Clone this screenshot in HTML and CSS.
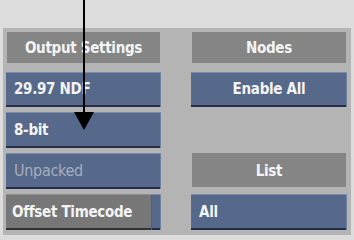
FILE: index.html
```html
<!DOCTYPE html>
<html lang="en">
<head>
  <meta charset="UTF-8">
  <title>Output Settings</title>
  <link rel="stylesheet" href="styles.css">
</head>
<body>

  <!-- Settings panel -->
  <div class="panel">
    <div class="header">Output Settings</div>
    <div class="header">Nodes</div>

    <div class="btn">29.97 NDF</div>
    <div class="btn center">Enable All</div>

    <div class="btn">8-bit</div>
    <div class="blank"></div>

    <div class="btn disabled">Unpacked</div>
    <div class="header list">List</div>

    <div class="btn toggle"><span class="toggle-on">Offset Timecode</span></div>
    <div class="btn">All</div>
  </div>

  <!-- Callout arrow -->
  <svg class="arrow" width="24" height="132" viewBox="0 0 24 132">
    <line x1="12" y1="0" x2="12" y2="114" stroke="#000" stroke-width="2"/>
    <polygon points="2,112 22,112 12,130" fill="#000"/>
  </svg>

</body>
</html>
```

FILE: styles.css
```css
body {
  margin: 0;
  padding: 28px 3px 0 3px;
  background: #dcdcdc;
  font-family: 'DejaVu Sans Condensed', 'DejaVu Sans', sans-serif;
  font-weight: bold;
  font-size: 15px;
  letter-spacing: -0.3px;
  color: #f4f4f4;
  position: relative;
  height: 240px;
  box-sizing: border-box;
}

.panel {
  width: 348px;
  height: 207px;
  box-sizing: border-box;
  background: #b4b4b4;
  padding: 4px 4px 0 3px;
  display: grid;
  grid-template-columns: 155px 156px;
  grid-template-rows: 35px 35px 36px 36px 36px;
  column-gap: 30px;
  row-gap: 5px;
}

.header {
  height: 31px;
  margin: 0 1px;
  background: #858585;
  display: flex;
  align-items: center;
  justify-content: center;
  padding-top: 1px;
  box-sizing: border-box;
}

.header.list {
  height: 34px;
}

.btn {
  background: #56698a;
  box-shadow: inset 0 1px 0 #7a8dad, inset -1px 0 0 #6f82a2, inset 0 -2px 0 #272c4c;
  display: flex;
  align-items: center;
  padding-left: 8px;
  padding-bottom: 1px;
}

.btn.center {
  justify-content: center;
  padding-left: 0;
}

.btn.disabled {
  color: #a6aebd;
  font-weight: normal;
  font-size: 16px;
}

.btn.toggle {
  padding: 0 9px 0 0;
  align-items: stretch;
}

.toggle-on {
  flex: 1;
  display: flex;
  align-items: center;
  padding-left: 6px;
  background: #777;
  box-shadow: inset 0 1px 0 #8e8e8e, inset -1px 0 0 #5e5e5e, inset 0 -2px 0 #333;
}

.arrow {
  position: absolute;
  left: 72px;
  top: 0;
}
```
